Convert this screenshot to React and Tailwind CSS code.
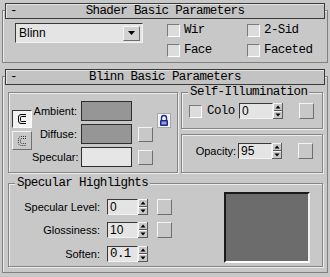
import React from 'react'

const mono = "font-['Liberation_Mono',monospace] text-[12.5px] tracking-[-0.6px] text-black"
const sans = "font-['Liberation_Sans',Arial,sans-serif] text-[11px] text-black"
const raised = 'border border-t-[#f4f4f4] border-l-[#f4f4f4] border-b-[#6e6e6e] border-r-[#6e6e6e] bg-[#c8c8c8]'
const sunken = 'border border-t-[#3a3a3a] border-l-[#3a3a3a] border-b-[#f2f2f2] border-r-[#f2f2f2] bg-[#e4e4e4]'
const etched = 'border border-[#858585] shadow-[inset_1px_1px_0_#ededed,1px_1px_0_#ededed]'

function Check() {
  return <span className="block w-[13px] h-[13px] shrink-0 border border-t-[#7a7a7a] border-l-[#7a7a7a] border-b-white border-r-white bg-[#dcdcdc]" />
}

function CheckItem({ label }) {
  return (
    <div className="flex items-center h-[14px]">
      <Check />
      <span className={`${mono} ml-[4px] whitespace-nowrap leading-[14px]`}>{label}</span>
    </div>
  )
}

function Spin() {
  return (
    <svg width="10" height="16" viewBox="0 0 10 16" className="block shrink-0">
      <rect x="0" y="0" width="10" height="16" fill="#c8c8c8" />
      <rect x="0" y="0" width="10" height="1" fill="#f4f4f4" />
      <rect x="0" y="0" width="1" height="16" fill="#f4f4f4" />
      <rect x="0" y="15" width="10" height="1" fill="#5a5a5a" />
      <rect x="9" y="0" width="1" height="16" fill="#5a5a5a" />
      <rect x="1" y="7" width="8" height="1" fill="#5a5a5a" />
      <rect x="1" y="8" width="8" height="1" fill="#f4f4f4" />
      <polygon points="2.5,5.5 7.5,5.5 5,2.5" fill="#000" />
      <polygon points="2.5,10.5 7.5,10.5 5,13.5" fill="#000" />
    </svg>
  )
}

function Field({ value, w, monoText }) {
  return (
    <div className={`${sunken} h-[16px] flex items-center shrink-0`} style={{ width: w }}>
      <span className={`${monoText ? mono : sans + ' text-[12px]'} pl-[2px] leading-none`}>{value}</span>
    </div>
  )
}

function MapBtn({ hidden, h = 15 }) {
  if (hidden) return <span className="block w-[15px] h-[15px] shrink-0" />
  return <span className={`${raised} block w-[15px] shrink-0`} style={{ height: h }} />
}

function Rollout({ title, className, children }) {
  return (
    <div className={`border border-[#808080] shadow-[inset_1px_1px_0_#ececec] w-[326px] ml-[2px] ${className}`}>
      <div className="-mt-[8px] mx-[2px] h-[16px] grid grid-cols-[18px_1fr_18px] items-center border border-[#3a3a3a] bg-[#c3c3c3] shadow-[inset_1px_1px_0_#e4e4e4]">
        <span className={`${mono} pl-[4px] leading-none`}>-</span>
        <span className={`${mono} text-center leading-none`}>{title}</span>
        <span />
      </div>
      {children}
    </div>
  )
}

function Group({ title, className, children }) {
  return (
    <div className={`${etched} flex flex-col ${className}`}>
      {title && (
        <span className={`${mono} -mt-[7px] ml-[6px] px-[2px] self-start bg-[#c8c8c8] leading-[12px]`}>{title}</span>
      )}
      {children}
    </div>
  )
}

function ColorRow({ label, fill, btn }) {
  return (
    <div className="flex items-center h-[20px]">
      <span className={`${sans} w-[45px] text-right whitespace-nowrap`}>{label}</span>
      <span className={`ml-[4px] w-[51px] h-[20px] border border-[#2e2e2e] shrink-0 ${fill}`} />
      <span className="ml-[6px]">
        <MapBtn hidden={!btn} />
      </span>
    </div>
  )
}

function SpecRow({ label, value, btn, monoText, className }) {
  return (
    <div className={`flex items-center h-[16px] ${className}`}>
      <span className={`${sans} w-[91px] text-right whitespace-nowrap`}>{label}</span>
      <span className="ml-[7px] flex">
        <Field value={value} w={31} monoText={monoText} />
        <Spin />
      </span>
      <span className="ml-[9px]">
        <MapBtn hidden={!btn} h={16} />
      </span>
    </div>
  )
}

export default function App() {
  return (
    <div className="w-[330px] h-[277px] bg-[#c8c8c8] overflow-hidden flex flex-col">
      <Rollout title="Shader Basic Parameters" className="mt-[10px]">
        <div className="flex pl-[12px] pt-[4px] pb-[5px]">
          <div className={`w-[128px] h-[20px] flex items-center ${sunken}`}>
            <span className={`${sans} text-[12px] flex-1 pl-[3px]`}>Blinn</span>
            <span className={`${raised} w-[17px] h-[15px] mr-[2px] flex items-center justify-center bg-[#d2d2d2]`}>
              <svg width="7" height="4" viewBox="0 0 7 4">
                <polygon points="0,0 7,0 3.5,4" fill="#000" />
              </svg>
            </span>
          </div>
          <div className="ml-[24px] grid grid-cols-[80px_80px] gap-y-[6px] content-start">
            <CheckItem label="Wir" />
            <CheckItem label="2-Sid" />
            <CheckItem label="Face" />
            <CheckItem label="Faceted" />
          </div>
        </div>
      </Rollout>

      <Rollout title="Blinn Basic Parameters" className="mt-[13px]">
        <div className="pl-[5px] pt-[7px] pb-[5px] flex flex-col">
          <div className="flex">
            <Group className="w-[170px] h-[81px]">
              <div className="flex">
                <div className="ml-[3px] mt-[17px] flex flex-col gap-[3px] w-[20px]">
                  <span className="w-[20px] h-[18px] border border-t-[#3a3a3a] border-l-[#3a3a3a] border-b-white border-r-white bg-[#f2f2f2] flex items-center justify-center">
                    <svg width="10" height="12" viewBox="0 0 10 12">
                      <path d="M9 1.5H4A2.5 2.5 0 0 0 1.5 4V8A2.5 2.5 0 0 0 4 10.5H9" fill="none" stroke="#000" />
                      <path d="M9 3.5H4.5A1 1 0 0 0 3.5 4.5V7.5A1 1 0 0 0 4.5 8.5H9" fill="none" stroke="#000" />
                    </svg>
                  </span>
                  <span className={`${raised} w-[20px] h-[19px] flex items-center justify-center`}>
                    <svg width="10" height="12" viewBox="0 0 10 12">
                      <path d="M9 1.5H4A2.5 2.5 0 0 0 1.5 4V8A2.5 2.5 0 0 0 4 10.5H9" fill="none" stroke="#333" strokeDasharray="1 1" />
                      <path d="M9 3.5H4.5A1 1 0 0 0 3.5 4.5V7.5A1 1 0 0 0 4.5 8.5H9" fill="none" stroke="#333" strokeDasharray="1 1" />
                    </svg>
                  </span>
                </div>
                <div className="flex flex-col gap-[3px] pt-[8px]">
                  <ColorRow label="Ambient:" fill="bg-[#969696]" />
                  <ColorRow label="Diffuse:" fill="bg-[#969696]" btn />
                  <ColorRow label="Specular:" fill="bg-[#e6e6e6]" btn />
                </div>
                <div className="ml-[4px] mt-[20px]">
                  <svg width="14" height="15" viewBox="0 0 14 15" className="block">
                    <rect x="0.5" y="0.5" width="13" height="14" fill="#f4f4f4" stroke="#a8a8a8" />
                    <path d="M4.5 7V5a2.5 2.5 0 0 1 5 0v2" fill="none" stroke="#1c2a8c" strokeWidth="1.4" />
                    <rect x="3" y="7" width="8" height="6" rx="1" fill="#1c2a8c" />
                    <rect x="4.5" y="8.5" width="5" height="3" fill="#8f9fe0" />
                  </svg>
                </div>
              </div>
            </Group>
            <div className="ml-[3px] w-[142px] flex flex-col">
              <Group title="Self-Illumination" className="h-[37px]">
                <div className="flex items-center mt-[5px] pl-[7px] h-[16px]">
                  <Check />
                  <span className={`${mono} ml-[5px] w-[28px] whitespace-nowrap leading-[14px]`}>Colo</span>
                  <span className="ml-[4px] flex">
                    <Field value="0" w={34} />
                    <Spin />
                  </span>
                  <span className="ml-[16px]">
                    <MapBtn h={16} />
                  </span>
                </div>
              </Group>
              <Group className="mt-[5px] h-[39px]">
                <div className="flex items-center mt-[8px] h-[16px]">
                  <span className={`${sans} w-[54px] text-right`}>Opacity:</span>
                  <span className="ml-[2px] flex">
                    <Field value="95" w={34} />
                    <Spin />
                  </span>
                  <span className="ml-[16px]">
                    <MapBtn h={16} />
                  </span>
                </div>
              </Group>
            </div>
          </div>

          <Group title="Specular Highlights" className="mt-[10px] w-[315px] h-[84px]">
            <div className="flex mt-[3px]">
              <div className="flex flex-col pt-[7px]">
                <SpecRow label="Specular Level:" value="0" btn />
                <SpecRow label="Glossiness:" value="10" btn className="mt-[7px]" />
                <SpecRow label="Soften:" value="0.1" monoText className="mt-[8px]" />
              </div>
              <div className="ml-[52px] w-[86px] h-[71px] bg-[#6c6c6c] border-2 border-t-[#1a1a1a] border-l-[#1a1a1a] border-b-white border-r-[#f0f0f0]" />
            </div>
          </Group>
        </div>
      </Rollout>
    </div>
  )
}
